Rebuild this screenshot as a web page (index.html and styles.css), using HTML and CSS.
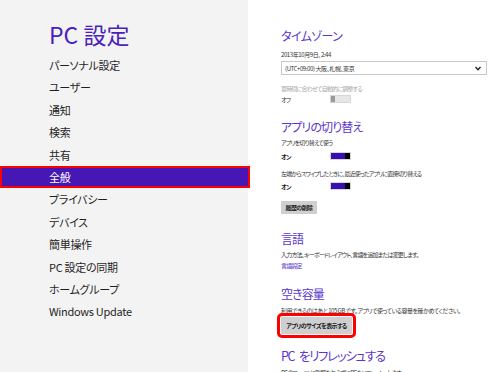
FILE: index.html
```html
<!DOCTYPE html>
<html lang="ja">
<head>
  <meta charset="UTF-8" />
  <title>PC 設定</title>
  <link rel="stylesheet" href="styles.css">
</head>
<body>
  <div class="page">
    <!-- 左側メニュー -->
    <div class="side">
      <h1 class="side-title">PC 設定</h1>
      <div class="side-item">パーソナル設定</div>
      <div class="side-item">ユーザー</div>
      <div class="side-item">通知</div>
      <div class="side-item">検索</div>
      <div class="side-item">共有</div>
      <div class="side-item active">全般</div>
      <div class="side-item">プライバシー</div>
      <div class="side-item">デバイス</div>
      <div class="side-item">簡単操作</div>
      <div class="side-item">PC 設定の同期</div>
      <div class="side-item">ホームグループ</div>
      <div class="side-item">Windows Update</div>
    </div>

    <!-- 右側の設定 -->
    <div class="main">
      <h2 class="sec-title first">タイムゾーン</h2>
      <p class="small date">2013年10月9日、2:44</p>
      <div class="select">
        <span>(UTC+09:00) 大阪、札幌、東京</span>
        <svg class="chev" width="6" height="5" viewBox="0 0 6 5"><path d="M0.5 1 L3 3.8 L5.5 1" fill="none" stroke="#222" stroke-width="1.4"/></svg>
      </div>
      <p class="small grey dst">夏時間に合わせて自動的に調整する</p>
      <div class="toggle-row">
        <span class="toggle-label">オフ</span>
        <span class="toggle off"><span class="thumb"></span></span>
      </div>

      <h2 class="sec-title">アプリの切り替え</h2>
      <p class="small gap2">アプリを切り替えて使う</p>
      <div class="toggle-row gap3">
        <span class="toggle-label bold">オン</span>
        <span class="toggle on"><span class="thumb"></span></span>
      </div>
      <p class="small gap8">左端からスワイプしたときに、最近使ったアプリに直接切り替える</p>
      <div class="toggle-row gap2">
        <span class="toggle-label bold">オン</span>
        <span class="toggle on"><span class="thumb"></span></span>
      </div>
      <button class="btn history">履歴の削除</button>

      <h2 class="sec-title lang">言語</h2>
      <p class="small gap2">入力方法、キーボードレイアウト、言語を追加または変更します。</p>
      <p class="small link">言語設定</p>

      <h2 class="sec-title">空き容量</h2>
      <p class="small gap3 wide">利用できるのはあと 105 GB です。アプリで使っている容量を確かめてください。</p>
      <button class="btn appsize">アプリのサイズを表示する</button>

      <h2 class="sec-title refresh">PC をリフレッシュする</h2>
      <p class="small gap3">PC のファイルに影響を与えずに PC をリフレッシュします。</p>
    </div>
  </div>
</body>
</html>
```

FILE: styles.css
```css
html, body {
  margin: 0;
  padding: 0;
  height: 100%;
  overflow: hidden;
}

body {
  font-family: "Noto Sans CJK JP", "Noto Sans", sans-serif;
  font-feature-settings: "palt" 1;
  color: #1a1a1a;
  background: #fff;
}

.page {
  display: flex;
  height: 372px;
}

/* 左メニュー */
.side {
  width: 248px;
  flex-shrink: 0;
  background: #f3f3f3;
  padding-top: 19px;
  box-sizing: border-box;
}

.side-title {
  margin: 0 0 5px 49px;
  font-size: 23px;
  line-height: 30px;
  font-weight: normal;
  color: #4a1fbd;
}

.side-item {
  height: 22.4px;
  line-height: 22.4px;
  padding-left: 49px;
  font-size: 11px;
  letter-spacing: -0.3px;
  color: #1f1f1f;
  box-sizing: border-box;
}

.side-item.active {
  background: #4617b4;
  color: #fff;
  border: 2px solid #f00;
  padding-left: 47px;
  line-height: 18.4px;
  width: 250px;
}

/* 右側 */
.main {
  flex: 1;
  padding-left: 33px;
  padding-right: 13px;
  overflow: hidden;
}

.sec-title {
  margin: 14px 0 0;
  font-size: 12px;
  letter-spacing: -0.9px;
  line-height: 18px;
  font-weight: normal;
  color: #5a37cc;
}

.sec-title.first { margin-top: 27px; letter-spacing: -0.6px; }
.sec-title.lang { margin-top: 16px; }
.sec-title.refresh { margin-top: 13px; font-size: 12.5px; letter-spacing: -1.3px; word-spacing: 3px; }

.small {
  margin: 0;
  font-size: 6px;
  letter-spacing: -0.8px;
  line-height: 10px;
  color: #333;
  white-space: nowrap;
}

.date { margin-top: 5px; letter-spacing: -0.4px; }
.wide { letter-spacing: -0.5px; }
.grey { color: #a8a8a8; }
.dst { margin-top: 9px; }
.gap2 { margin-top: 2px; }
.gap3 { margin-top: 3px; }
.gap8 { margin-top: 8px; }
.bold { font-weight: bold; color: #111; }

.link {
  margin-top: 1px;
  color: #5a37cc;
}

.select {
  margin-top: 1px;
  height: 14px;
  border: 1px solid #c8c8c8;
  box-sizing: border-box;
  display: flex;
  align-items: center;
  justify-content: space-between;
  padding: 0 5px 0 3px;
  font-size: 6px;
  letter-spacing: -0.4px;
  color: #333;
}

.chev { display: block; }

.toggle-row {
  display: flex;
  align-items: center;
  height: 10px;
  font-size: 6px;
  letter-spacing: -0.6px;
  color: #333;
}

.toggle-label {
  width: 49px;
}

.toggle {
  width: 21px;
  height: 8px;
  box-sizing: border-box;
  display: flex;
  border: 1px solid #d6d6d6;
}

.toggle.off {
  background: #e6e6e6;
  justify-content: flex-start;
}

.toggle.off .thumb {
  width: 4px;
  background: #9a9a9a;
}

.toggle.on {
  background: #3a0fb0;
  justify-content: flex-end;
}

.toggle.on .thumb {
  width: 5px;
  background: #000;
}

.btn {
  display: flex;
  align-items: center;
  justify-content: center;
  font-family: inherit;
  font-feature-settings: "palt" 1;
  font-size: 6px;
  letter-spacing: -0.6px;
  font-weight: bold;
  white-space: nowrap;
  color: #1a1a1a;
  background: #cfcfcf;
  border: none;
  padding: 0;
  cursor: pointer;
}

.history {
  margin-top: 10px;
  height: 13px;
  width: 36px;
}

.appsize {
  margin-top: 1px;
  height: 17px;
  width: 71px;
  outline: 3px solid #f00;
  outline-offset: 1px;
  border-radius: 1px;
}
```
